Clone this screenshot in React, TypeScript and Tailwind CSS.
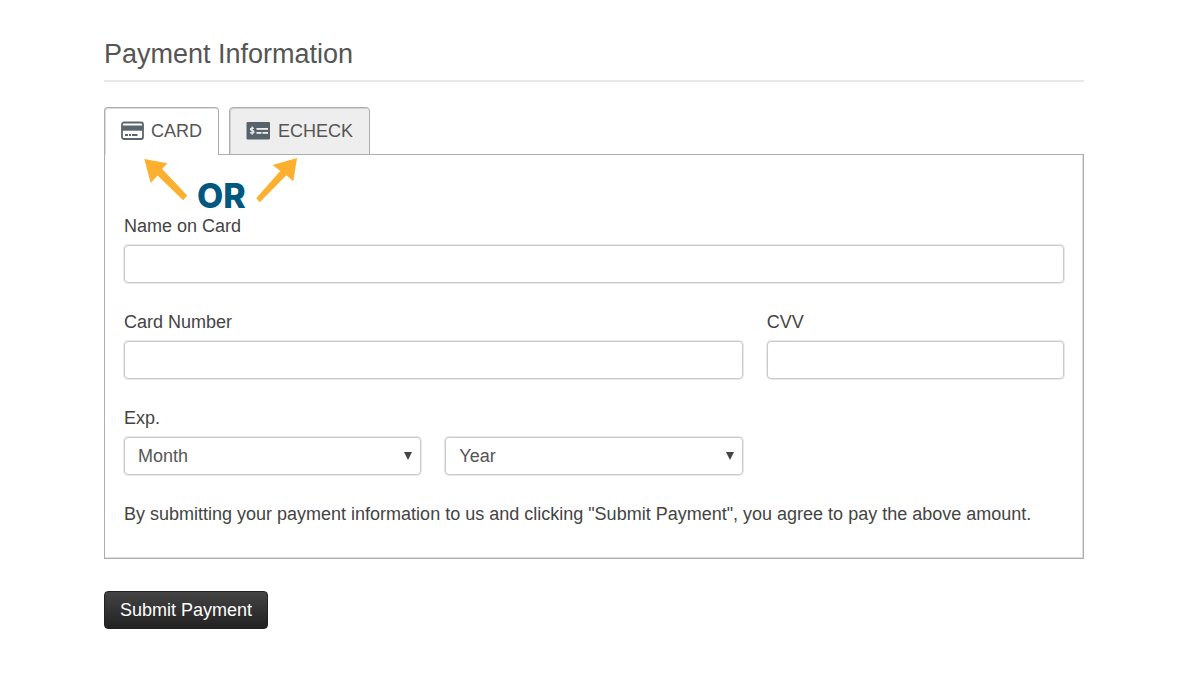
import { useState } from "react";
import type { ReactNode } from "react";

const controlClass =
  "block h-[38px] w-full appearance-none rounded-[4px] border border-[#cbcbcb] bg-white px-[13px] text-lg leading-6 text-[#555] shadow-[0_0_0_1px_#e9e9e9]";

function CardIcon() {
  return (
    <svg className="h-6 w-6 shrink-0" viewBox="0 0 24 24" aria-hidden="true">
      <rect x="1" y="3.5" width="21" height="16.5" rx="2" fill="#fff" stroke="#5a666e" strokeWidth="1.8" />
      <rect x="1" y="6.5" width="21" height="5.2" fill="#5a666e" />
      <rect x="4" y="15" width="3" height="2" fill="#5a666e" />
      <rect x="8" y="15" width="2" height="2" fill="#5a666e" />
      <rect x="11" y="15" width="5.5" height="2" fill="#5a666e" />
    </svg>
  );
}

function CheckIcon() {
  return (
    <svg className="h-6 w-6 shrink-0" viewBox="0 0 24 24" aria-hidden="true">
      <rect x="0.5" y="3" width="23.5" height="17.5" rx="1" fill="#56636b" />
      <path
        d="M7.8 9.7C7.2 8.7 4.4 8.7 4.4 10.3C4.4 11.9 8 11.1 8 12.9C8 14.5 4.8 14.3 4.1 13.4M6.2 7.4V15.8"
        fill="none"
        stroke="#e8ebec"
        strokeWidth="1.3"
      />
      <rect x="10.5" y="9" width="11.5" height="1.8" fill="#eef0f1" />
      <rect x="10.5" y="13" width="5" height="1.8" fill="#eef0f1" />
      <rect x="16.5" y="13" width="5.5" height="1.8" fill="#eef0f1" />
    </svg>
  );
}

function Tab({ active, onSelect, children }: { active: boolean; onSelect: () => void; children: ReactNode }) {
  return (
    <button
      type="button"
      role="tab"
      aria-selected={active}
      onClick={onSelect}
      className={
        active
          ? "flex h-12 items-center gap-1.5 rounded-t-[4px] border border-b-0 border-[#adadad] bg-white px-4 pb-px text-lg leading-6 text-[#555] shadow-[inset_1px_1px_0_#dedede]"
          : "flex h-12 items-center gap-2 rounded-t-[4px] border border-[#adadad] bg-[#eee] px-4 text-lg leading-6 text-[#555] shadow-[inset_1px_1px_0_#d2d2d2]"
      }
    >
      {children}
    </button>
  );
}

function Field({ id, label, className, children }: { id: string; label: string; className?: string; children: ReactNode }) {
  return (
    <div className={className}>
      <label htmlFor={id} className="mb-[7px] block text-lg leading-6 text-[#444]">
        {label}
      </label>
      {children}
    </div>
  );
}

function Select({ id, name, options, label }: { id: string; name: string; options: string[]; label?: string }) {
  return (
    <div className="relative">
      <select id={id} name={name} aria-label={label} className={controlClass}>
        {options.map((option) => (
          <option key={option}>{option}</option>
        ))}
      </select>
      <svg className="pointer-events-none absolute top-3.5 right-2 h-2.5 w-2.5" viewBox="0 0 10 10" aria-hidden="true">
        <path d="M1 1H9L5 9Z" fill="#444" />
      </svg>
    </div>
  );
}

const months = ["Month", "01", "02", "03", "04", "05", "06", "07", "08", "09", "10", "11", "12"];
const years = ["Year", "2024", "2025", "2026", "2027", "2028", "2029", "2030"];

export default function App() {
  const [method, setMethod] = useState("card");

  return (
    <main className="bg-white pt-9 pr-[116px] pb-12 pl-[104px] font-['Liberation_Sans',Arial,sans-serif] text-[#444]">
      <h1 className="border-b-2 border-[#e8e8e8] pb-2 text-[27px] leading-9 text-[#555]">Payment Information</h1>

      <form onSubmit={(event) => event.preventDefault()}>
        <div role="tablist" className="relative z-10 mt-[25px] -mb-px flex gap-2.5">
          <Tab active={method === "card"} onSelect={() => setMethod("card")}>
            <CardIcon />
            CARD
          </Tab>
          <Tab active={method === "echeck"} onSelect={() => setMethod("echeck")}>
            <CheckIcon />
            ECHECK
          </Tab>
        </div>

        <section
          role="tabpanel"
          className="relative border border-[#adadad] px-[19px] pt-[59px] pb-8 shadow-[inset_-1px_-1px_0_#dedede]"
        >
          <div className="pointer-events-none absolute top-0 left-9 z-10 h-12 w-40">
            <svg className="absolute inset-0 h-12 w-40" viewBox="141 155 160 48" fill="#fdb02f" aria-hidden="true">
              <path d="M144.3 159L167.3 163.3L162.2 169L187.2 195.4L183.2 200.2L157.5 175.4L150.7 183Z" />
              <path d="M297 158L293.3 181.3L286.4 175.2L259.8 202.3L256.2 198.2L280.3 170.9L272.7 165Z" />
            </svg>
            <span className="absolute top-[23px] left-14 font-[Inter] text-[34px] leading-9 font-extrabold text-[#00587f]">
              OR
            </span>
          </div>

          <div className="grid grid-cols-3 gap-x-6 gap-y-[27px]">
            <Field id="name" label="Name on Card" className="col-span-3">
              <input id="name" name="name" type="text" className={controlClass} />
            </Field>
            <Field id="number" label="Card Number" className="col-span-2">
              <input id="number" name="number" type="text" inputMode="numeric" className={controlClass} />
            </Field>
            <Field id="cvv" label="CVV">
              <input id="cvv" name="cvv" type="text" inputMode="numeric" className={controlClass} />
            </Field>
            <Field id="month" label="Exp.">
              <Select id="month" name="month" options={months} />
            </Field>
            <div className="self-end">
              <Select id="year" name="year" label="Expiration year" options={years} />
            </div>
          </div>

          <p className="mt-[27px] text-lg leading-6">
            By submitting your payment information to us and clicking "Submit Payment", you agree to pay the above
            amount.
          </p>
        </section>

        <button
          type="submit"
          className="mt-8 h-[38px] rounded-[4px] border border-[#222] bg-linear-to-b from-[#444] to-[#222] px-[15px] text-lg leading-6 text-white"
        >
          Submit Payment
        </button>
      </form>
    </main>
  );
}
